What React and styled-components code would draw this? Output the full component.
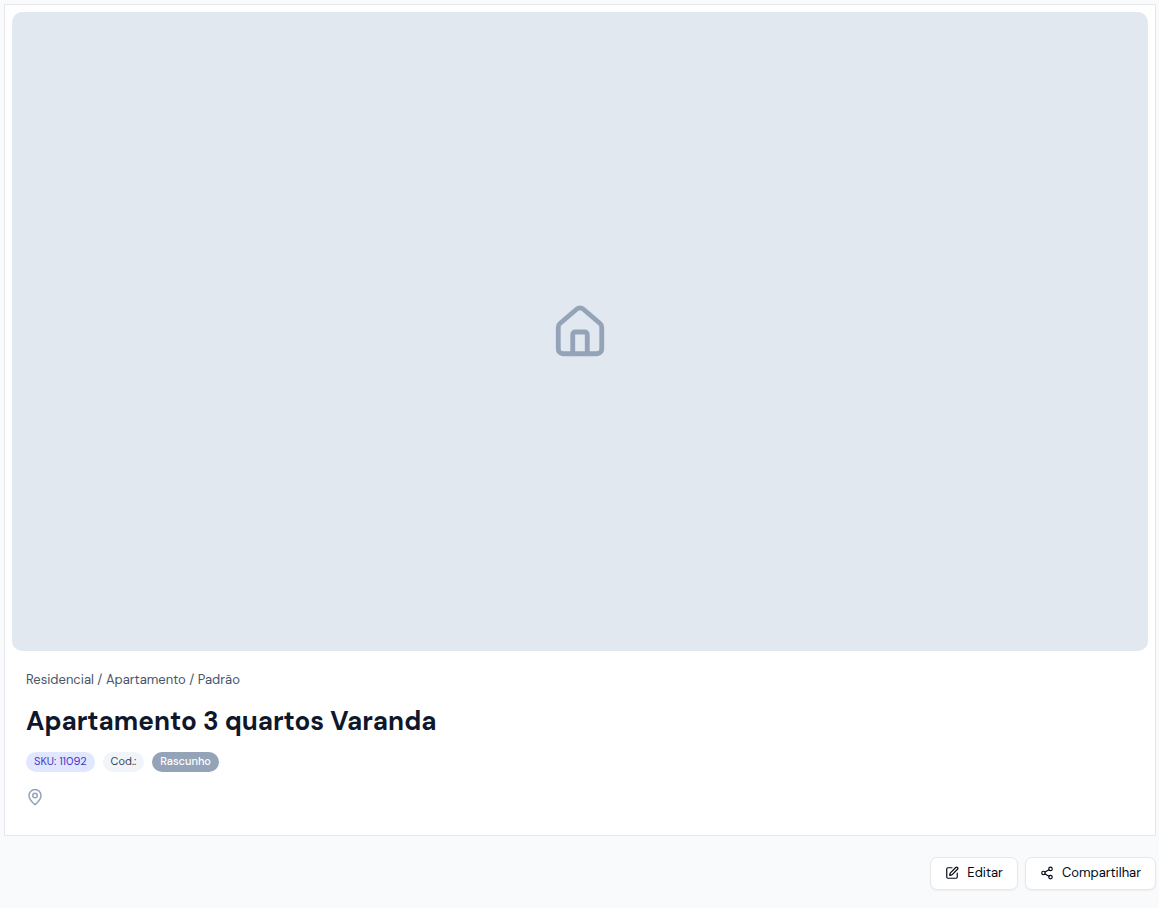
import styled, {createGlobalStyle} from "styled-components";
import {House, MapPin, Share2, SquarePen} from "lucide-react";

const tones = {
    sku: {background: "#e0e7ff", color: "#4338ca", weight: 400},
    code: {background: "#f1f5f9", color: "#334155", weight: 400},
    draft: {background: "#94a3b8", color: "#ffffff", weight: 500},
}

const App = () => {

    return (
        <>
            <GlobalStyle/>
            <Page>
                <Card>
                    <Cover>
                        <House size={58} strokeWidth={2} aria-hidden="true"/>
                    </Cover>
                    <Info>
                        <Category>Residencial / Apartamento / Padrão</Category>
                        <Title>Apartamento 3 quartos Varanda</Title>
                        <Badges>
                            <Badge $tone="sku">SKU: 11092</Badge>
                            <Badge $tone="code">Cod.:</Badge>
                            <Badge $tone="draft">Rascunho</Badge>
                        </Badges>
                        <Address>
                            <MapPin size={18} aria-hidden="true"/>
                        </Address>
                    </Info>
                </Card>
                <Actions>
                    <ActionButton type="button"><SquarePen size={14}/>Editar</ActionButton>
                    <ActionButton type="button"><Share2 size={14}/>Compartilhar</ActionButton>
                </Actions>
            </Page>
        </>
    );
}

const GlobalStyle = createGlobalStyle`
  * {
    box-sizing: border-box;
  }
  body {
    margin: 0;
    background: #f8fafc;
    color: #0f172a;
    font-family: "DM Sans", Inter, sans-serif;
  }
`

const Page = styled.main`
  padding: 4px 3px 18px 4px;
`

const Card = styled.section`
  padding: 7px;
  background: #ffffff;
  border: 1px solid #e5e7eb;
`

const Cover = styled.div`
  display: flex;
  align-items: center;
  justify-content: center;
  aspect-ratio: 16 / 9;
  border-radius: 10px;
  background: #e2e8f0;
  color: #94a3b8;
`

const Info = styled.div`
  display: flex;
  flex-direction: column;
  padding: 20px 14px 21px;
`

const Category = styled.p`
  margin: 0 0 14px;
  font-size: 13px;
  line-height: 18px;
  color: #475569;
`

const Title = styled.h1`
  margin: 0 0 12px;
  font-size: 26px;
  line-height: 37px;
  font-weight: 700;
`

const Badges = styled.div`
  display: flex;
  flex-wrap: wrap;
  gap: 8px;
  margin-bottom: 15px;
`

const Badge = styled.span`
  padding: 0 8px 2px;
  border-radius: 10px;
  font-size: 11px;
  line-height: 18px;
  font-weight: ${({$tone}) => tones[$tone].weight};
  color: ${({$tone}) => tones[$tone].color};
  background: ${({$tone}) => tones[$tone].background};
`

const Address = styled.div`
  display: flex;
  align-items: center;
  min-height: 20px;
  color: #94a3b8;
`

const Actions = styled.div`
  display: flex;
  justify-content: flex-end;
  gap: 7px;
  margin-top: 21px;
`

const ActionButton = styled.button`
  display: inline-flex;
  align-items: center;
  gap: 8px;
  height: 33px;
  padding: 0 14px 2px;
  border: 1px solid #e5e7eb;
  border-radius: 7px;
  background: #ffffff;
  box-shadow: 0 1px 2px rgba(0, 0, 0, 0.05);
  color: #020817;
  font-family: inherit;
  font-size: 13px;
  font-weight: 400;
  cursor: pointer;
`

export default App;
